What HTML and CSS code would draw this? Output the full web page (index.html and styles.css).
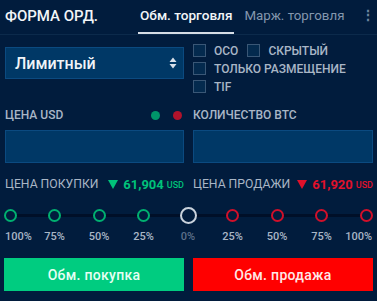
FILE: index.html
```html
<!DOCTYPE html>
<html lang="ru">
<head>
<meta charset="utf-8">
<link rel="stylesheet" href="styles.css">
</head>
<body>
<div class="app">
  <header class="header">
    <div class="title">ФОРМА ОРД.</div>
    <nav class="tabs">
      <div class="tab active">Обм. торговля</div>
      <div class="tab">Марж. торговля</div>
    </nav>
    <div class="more">⋮</div>
  </header>

  <section class="row top">
    <div class="select">
      <span>Лимитный</span>
      <svg class="updown" width="8" height="12" viewBox="0 0 8 12"><path d="M4 0.5 L7.5 5 H0.5 Z M4 11.5 L7.5 7 H0.5 Z" fill="#d8e0ea"/></svg>
    </div>
    <div class="checks">
      <div class="check-line">
        <label class="check"><span class="box"></span>OCO</label>
        <label class="check"><span class="box"></span>СКРЫТЫЙ</label>
      </div>
      <div class="check-line"><label class="check"><span class="box"></span>ТОЛЬКО РАЗМЕЩЕНИЕ</label></div>
      <div class="check-line"><label class="check"><span class="box"></span>TIF</label></div>
    </div>
  </section>

  <section class="row fields">
    <div class="field">
      <div class="field-label"><span>ЦЕНА USD</span><span class="dots"><i class="dot green"></i><i class="dot red"></i></span></div>
      <div class="input"></div>
    </div>
    <div class="field">
      <div class="field-label"><span>КОЛИЧЕСТВО BTC</span></div>
      <div class="input"></div>
    </div>
  </section>

  <section class="row prices">
    <div class="price"><span class="plabel">ЦЕНА ПОКУПКИ</span><span class="pval buy"><svg class="tri" width="10" height="9" viewBox="0 0 10 9"><path d="M0 0 H10 L5 9 Z" fill="currentColor"/></svg>61,904<small>USD</small></span></div>
    <div class="price"><span class="plabel">ЦЕНА ПРОДАЖИ</span><span class="pval sell"><svg class="tri" width="10" height="9" viewBox="0 0 10 9"><path d="M0 0 H10 L5 9 Z" fill="currentColor"/></svg>61,920<small>USD</small></span></div>
  </section>

  <section class="slider">
    <div class="stop first"><span class="knob g"></span><span class="pct">100%</span></div>
    <div class="stop"><span class="knob g"></span><span class="pct">75%</span></div>
    <div class="stop"><span class="knob g"></span><span class="pct">50%</span></div>
    <div class="stop"><span class="knob g"></span><span class="pct">25%</span></div>
    <div class="stop mid"><span class="knob w"></span><span class="pct zero">0%</span></div>
    <div class="stop"><span class="knob r"></span><span class="pct">25%</span></div>
    <div class="stop"><span class="knob r"></span><span class="pct">50%</span></div>
    <div class="stop"><span class="knob r"></span><span class="pct">75%</span></div>
    <div class="stop last"><span class="knob r"></span><span class="pct">100%</span></div>
  </section>

  <section class="row buttons">
    <button class="btn buy-btn">Обм. покупка</button>
    <button class="btn sell-btn">Обм. продажа</button>
  </section>
</div>
</body>
</html>
```

FILE: styles.css
```css
* { box-sizing: border-box; }
html, body {
  margin: 0;
  padding: 0;
  background: #011c3d;
}
body {
  font-family: Roboto, "Liberation Sans", Arial, sans-serif;
  color: #a9b6c6;
  width: 377px;
  height: 301px;
  overflow: hidden;
}
.app { display: flex; flex-direction: column; }

.header {
  height: 35px;
  display: flex;
  align-items: stretch;
  border-bottom: 1px solid #0c2a4b;
  padding-left: 5px;
}
.header > * { flex-shrink: 0; }
.title {
  color: #f2f5f8;
  font-size: 15px;
  font-weight: 500;
  display: flex;
  align-items: center;
  padding-bottom: 2px;
  width: 133px;
}
.tabs { display: flex; gap: 8px; }
.tab {
  font-size: 13.3px;
  font-weight: 400;
  color: #8497ae;
  display: flex;
  align-items: center;
  padding: 0 2px 2px;
  border-bottom: 2px solid transparent;
  white-space: nowrap;
}
.tab.active {
  font-size: 13.6px;
  font-weight: 500;
  color: #f2f5f8;
  border-bottom-color: #d6dde6;
}
.more {
  color: #6f84a0;
  font-size: 14px;
  font-weight: 700;
  display: flex;
  align-items: center;
  margin-left: 15px;
  padding-bottom: 4px;
}

.row {
  display: grid;
  grid-template-columns: 179px 180px;
  column-gap: 9px;
  padding-left: 5px;
}
.top { margin-top: 9px; height: 58px; }
.select {
  height: 32px;
  margin-top: 3px;
  background: #003866;
  border: 1px solid #0b4a80;
  display: flex;
  align-items: center;
  justify-content: space-between;
  padding: 0 6px 0 9px;
  color: #f0f4f8;
  font-size: 16px;
  font-weight: 500;
}
.checks { display: flex; flex-direction: column; gap: 5px; }
.check-line { display: flex; gap: 9px; height: 13px; }
.check {
  display: flex;
  align-items: center;
  gap: 8px;
  font-size: 12px;
  font-weight: 500;
  color: #a9b6c6;
}
.box {
  width: 13px;
  height: 13px;
  border: 1px solid #3a5776;
  background: #042a4e;
}

.fields { margin-top: 2px; }
.field-label {
  display: flex;
  justify-content: space-between;
  align-items: center;
  font-size: 12px;
  font-weight: 500;
  height: 22px;
  padding-right: 2px;
}
.dots { display: flex; gap: 13px; }
.dot { width: 9px; height: 9px; border-radius: 50%; display: block; }
.dot.green { background: #00956a; }
.dot.red { background: #b0132c; }
.input {
  margin-top: 4px;
  height: 33px;
  background: #003866;
  border: 1px solid #0b4a80;
}

.prices { margin-top: 12px; height: 18px; }
.price {
  display: flex;
  justify-content: space-between;
  align-items: center;
  white-space: nowrap;
}
.plabel { font-weight: 400; font-size: 12.2px; color: #a9b6c6; }
.pval { font-weight: 700; font-size: 13px; display: flex; align-items: center; }
.tri { margin-right: 5px; margin-top: 1px; }
.pval small { font-size: 9px; font-weight: 500; margin-left: 3px; margin-top: 2px; }
.buy { color: #00c27a; }
.sell { color: #e0112b; }

.slider {
  margin-top: 14px;
  display: flex;
  justify-content: space-between;
  width: 376px;
  background: linear-gradient(#000f28, #000f28) no-repeat 10px 7px / 356px 3px;
}
.stop {
  width: 20px;
  display: flex;
  flex-direction: column;
  align-items: center;
}
.knob {
  width: 13px;
  height: 13px;
  border-radius: 50%;
  border: 2px solid;
  background: #011c3d;
  margin-top: 2px;
}
.knob.g { border-color: #00b070; }
.knob.r { border-color: #d0102a; }
.knob.w { width: 17px; height: 17px; margin-top: 0; border-color: #c9d2dc; }
.pct {
  margin-top: 8px;
  font-size: 11px;
  font-weight: 500;
  color: #a9b6c6;
  white-space: nowrap;
}
.mid .pct { margin-top: 6px; }
.pct.zero { color: #5d708a; }
.first .pct { align-self: flex-start; margin-left: 5px; }
.last .pct { align-self: flex-end; margin-right: 4px; }

.buttons { margin-top: 15px; padding-left: 4px; grid-template-columns: 180px 180px; }
.btn {
  height: 33px;
  border: none;
  font-family: inherit;
  font-size: 14px;
  font-weight: 500;
  letter-spacing: 0.3px;
}
.buy-btn { background: #00cc80; color: #e6fff4; }
.sell-btn { background: #ff0000; color: #ffe8e8; }
```
